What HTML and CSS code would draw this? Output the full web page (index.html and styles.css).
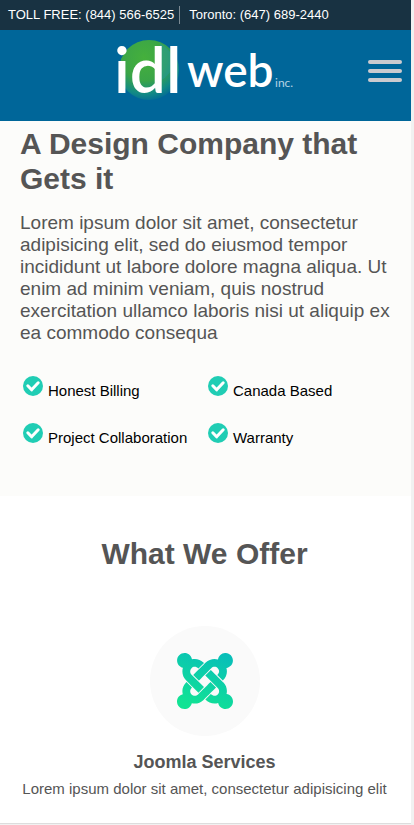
FILE: index.html
```html
<!DOCTYPE html>
<html lang="en">
<head>
<meta charset="utf-8">
<meta name="viewport" content="width=device-width, initial-scale=1">
<title>IDL Web Inc.</title>
<link rel="stylesheet" href="styles.css">
</head>
<body>
<div class="page">
  <div class="topbar">
    <span class="phone">TOLL FREE: (844) 566-6525</span>
    <span class="phone">Toronto: (647) 689-2440</span>
  </div>
  <header class="header">
    <a class="logo" href="#">
      <svg width="184" height="62" viewBox="-2 0 184 62" role="img" aria-label="idl web inc.">
        <defs>
          <radialGradient id="globe" cx="0.42" cy="0.3" r="0.75">
            <stop offset="0" stop-color="#45b03c"/>
            <stop offset="0.5" stop-color="#3ba547"/>
            <stop offset="0.8" stop-color="#128a85"/>
            <stop offset="1" stop-color="#006699"/>
          </radialGradient>
        </defs>
        <circle cx="33" cy="30" r="30" fill="url(#globe)"/>
        <path d="M44 3a29 29 0 0 1 14 18q-2 14-14 20z" fill="#2398a0" opacity="0.5"/>
        <text class="logo-idl" x="-2" y="53">idl</text>
        <text class="logo-web" x="71" y="47">web</text>
        <text class="logo-inc" x="159" y="47">inc.</text>
      </svg>
    </a>
    <button class="menu" type="button" aria-label="Menu">
      <span class="menu-line"></span>
      <span class="menu-line"></span>
      <span class="menu-line"></span>
    </button>
  </header>
  <main>
    <section class="hero">
      <h1 class="hero-title">A Design Company that Gets it</h1>
      <p class="hero-text">Lorem ipsum dolor sit amet, consectetur adipisicing elit, sed do eiusmod tempor incididunt ut labore dolore magna aliqua. Ut enim ad minim veniam, quis nostrud exercitation ullamco laboris nisi ut aliquip ex ea commodo consequa</p>
      <svg class="defs" width="0" height="0" aria-hidden="true">
        <symbol id="check" viewBox="0 0 20 20">
          <circle cx="10" cy="10" r="10" fill="#20cdb4"/>
          <path d="M4.8 9.8l3.8 4 6.6-7" fill="none" stroke="#fff" stroke-width="3" stroke-linecap="round" stroke-linejoin="round"/>
        </symbol>
      </svg>
      <ul class="features">
        <li class="feature"><svg class="check" aria-hidden="true"><use href="#check"/></svg><span class="feature-name">Honest Billing</span></li>
        <li class="feature"><svg class="check" aria-hidden="true"><use href="#check"/></svg><span class="feature-name">Canada Based</span></li>
        <li class="feature"><svg class="check" aria-hidden="true"><use href="#check"/></svg><span class="feature-name">Project Collaboration</span></li>
        <li class="feature"><svg class="check" aria-hidden="true"><use href="#check"/></svg><span class="feature-name">Warranty</span></li>
      </ul>
    </section>
    <section class="offer">
      <h2 class="offer-title">What We Offer</h2>
      <div class="service-icon">
        <svg width="56" height="56" viewBox="0 32 448 448" aria-hidden="true">
          <defs>
            <linearGradient id="teal" gradientUnits="userSpaceOnUse" x1="360" y1="32" x2="180" y2="480">
              <stop offset="0" stop-color="#08beb9"/>
              <stop offset="1" stop-color="#12e394"/>
            </linearGradient>
          </defs>
          <path fill="url(#teal)" d="M.6 92.1C.6 58.8 27.4 32 60.4 32c30 0 54.5 21.9 59.2 50.2 32.6-7.6 67.1.6 96.5 30l-44.3 44.3c-20.5-20.5-42.6-16.3-55.4-3.5-14.3 14.3-14.3 37.9 0 52.2l99.5 99.5-44 44.3c-87.7-87.2-49.7-49.7-99.8-99.7-26.8-26.5-35-64.8-24.8-98.9C20.4 144.6.6 120.7.6 92.1zm129.5 116.4l44.3 44.3c10-10 89.7-89.7 99.7-99.8 14.3-14.3 37.6-14.3 51.9 0 12.8 12.8 17 35-3.5 55.4l44 44.3c31.2-31.2 38.5-67.6 28.9-101.2 29.2-4.1 51.9-29.2 51.9-59.5 0-33.2-26.8-60.1-59.8-60.1-30.3 0-55.4 22.5-59.5 51.6-33.8-9.9-71.7-1.5-98.3 25.1-18.3 19.1-71.1 71.5-99.6 99.9zm266.3 152.2c8.2-32.7-.9-68.5-26.3-93.9-11.8-12.2 5 4.7-99.5-99.7l-44.3 44.3 99.7 99.7c14.3 14.3 14.3 37.6 0 51.9-12.8 12.8-35 17-55.4-3.5l-44 44.3c27.6 30.2 68 38.8 102.7 28 5.5 27.4 29.7 48.1 58.9 48.1 33 0 59.8-26.8 59.8-60.1 0-30.2-22.5-55-51.6-59.1zm-84.3-53.1l-44-44.3c-87 86.4-50.4 50.4-99.7 99.8-14.3 14.3-37.6 14.3-51.9 0-13.1-13.4-16.9-35.3 3.2-55.4l-44-44.3c-30.2 30.2-38 65.2-29.5 98.3-26.7 6-46.2 29.9-46.2 58.2C0 453.2 26.8 480 59.8 480c28.6 0 52.5-19.8 58.6-46.7 32.7 8.2 68.5-.6 94.2-26 32.1-32 12.2-12.4 99.5-99.7z"/>
        </svg>
      </div>
      <h3 class="service-title">Joomla Services</h3>
      <p class="service-text">Lorem ipsum dolor sit amet, consectetur adipisicing elit</p>
    </section>
  </main>
</div>
</body>
</html>
```
FILE: styles.css
```css
* {
  box-sizing: border-box;
}

body {
  margin: 0;
  background: #f1f1f1;
  color: #555;
  font-family: "Liberation Sans", Arial, sans-serif;
}

h1, h2, h3, p, ul {
  margin: 0;
  padding: 0;
}

.page {
  margin-right: 3px;
  background: #fff;
  border-bottom: 1px solid #ddd;
}

.topbar {
  display: flex;
  padding: 6px 8px;
  background: #183242;
  color: #fff;
  font-size: 13px;
  line-height: 18px;
}

.phone + .phone {
  margin-left: 5px;
  padding-left: 9px;
  border-left: 1px solid #7c8a93;
}

.header {
  display: grid;
  grid-template-columns: 1fr auto 1fr;
  align-items: center;
  padding: 10px 9px 19px;
  background: #006699;
}

.logo {
  display: block;
  grid-column: 2;
}

.logo svg {
  display: block;
  overflow: visible;
}

.logo text {
  fill: #fff;
  font-family: Lato, sans-serif;
}

.logo-idl {
  font-size: 64px;
  font-weight: 600;
}

.logo-web {
  font-size: 46px;
  font-weight: 600;
}

.logo .logo-inc {
  font-size: 12px;
  fill: #b5d3e3;
}

.menu {
  display: flex;
  flex-direction: column;
  gap: 5px;
  justify-self: end;
  width: 34px;
  padding: 0;
  border: 0;
  background: none;
}

.menu-line {
  width: 100%;
  height: 4px;
  border-radius: 2px;
  background: #cbcbcf;
}

.hero {
  padding: 5px 18px 49px 20px;
  background: #fcfcfa;
}

.hero-title {
  font-size: 30px;
  line-height: 35px;
}

.hero-text {
  margin-top: 16px;
  font-size: 19px;
  line-height: 22px;
}

.defs {
  display: block;
}

.features {
  display: grid;
  grid-template-columns: 1fr 1fr;
  row-gap: 23px;
  margin-top: 32px;
  padding-left: 3px;
  list-style: none;
}

.feature {
  display: flex;
  gap: 5px;
  color: #000;
  font-size: 15px;
  line-height: 18px;
}

.check {
  width: 20px;
  height: 20px;
}

.feature-name {
  padding-top: 6px;
}

.offer {
  padding: 40px 17px 24px 15px;
  text-align: center;
}

.offer-title {
  font-size: 30px;
  line-height: 35px;
}

.service-icon {
  display: flex;
  align-items: center;
  justify-content: center;
  width: 110px;
  height: 110px;
  margin: 55px auto 15px;
  border-radius: 50%;
  background: #fafafa;
}

.service-title {
  font-size: 18px;
  line-height: 22px;
}

.service-text {
  margin-top: 6px;
  font-size: 15px;
  line-height: 20px;
}
```
